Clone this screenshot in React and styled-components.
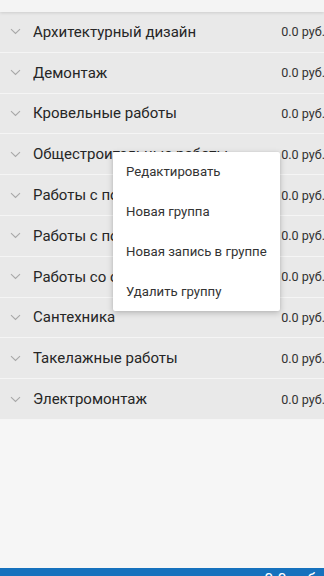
import React from "react";
import styled, { createGlobalStyle } from "styled-components";

const Global = createGlobalStyle`
  html, body { margin: 0; padding: 0; }
  body { font-family: Roboto, "Noto Sans", sans-serif; background: #f6f6f6; }
  * { box-sizing: border-box; }
`;

const Screen = styled.div`
  position: relative;
  width: 324px;
  height: 576px;
  overflow: hidden;
  display: flex;
  flex-direction: column;
  background: #f6f6f6;
`;

const TopStrip = styled.div`
  height: 12px;
  flex: none;
  background: #f4f4f4;
  box-shadow: 0 1px 3px rgba(0, 0, 0, 0.12);
  position: relative;
  z-index: 1;
`;

const List = styled.div`
  display: flex;
  flex-direction: column;
`;

const Row = styled.div`
  height: 40.8px;
  display: flex;
  align-items: center;
  background: #e9e9e9;
  border-bottom: 1px solid #f5f5f5;
  padding-left: 10px;
`;

const Chevron = styled.svg`
  width: 11px;
  height: 7px;
  flex: none;
  margin-right: 12px;
`;

const Name = styled.div`
  flex: 1;
  font-size: 15px;
  color: #262626;
  white-space: nowrap;
  overflow: hidden;
`;

const Amount = styled.div`
  font-size: 12.6px;
  color: #333;
  white-space: nowrap;
  margin-right: -1px;
`;

const Spacer = styled.div`
  flex: 1;
`;

const BottomBar = styled.div`
  height: 8px;
  flex: none;
  background: #1671bd;
  overflow: hidden;
  display: flex;
  justify-content: flex-end;
  padding-top: 4px;
  padding-right: 4px;
  color: #fff;
  font-size: 16px;
  line-height: 1;
`;

const Menu = styled.div`
  position: absolute;
  left: 113px;
  top: 152px;
  width: 167px;
  background: #fff;
  border-radius: 2px;
  box-shadow: 0 2px 6px rgba(0, 0, 0, 0.22), 0 0 2px rgba(0, 0, 0, 0.08);
  display: flex;
  flex-direction: column;
  z-index: 5;
`;

const MenuItem = styled.div`
  height: 39.8px;
  display: flex;
  align-items: center;
  padding-left: 13px;
  font-size: 13.2px;
  color: #333;
  white-space: nowrap;
`;

const items = [
  "Архитектурный дизайн",
  "Демонтаж",
  "Кровельные работы",
  "Общестроительные работы",
  "Работы с полами",
  "Работы с потолками",
  "Работы со стенами",
  "Сантехника",
  "Такелажные работы",
  "Электромонтаж",
];

const menu = ["Редактировать", "Новая группа", "Новая запись в группе", "Удалить группу"];

export default function App() {
  return (
    <>
      <Global />
      <Screen>
        <TopStrip />
        <List>
          {items.map((t) => (
            <Row key={t}>
              <Chevron viewBox="0 0 11 7">
                <path d="M1 1.2 L5.5 5.5 L10 1.2" fill="none" stroke="#a8a8a8" strokeWidth="1.1" />
              </Chevron>
              <Name>{t}</Name>
              <Amount>0.0 руб.</Amount>
            </Row>
          ))}
        </List>
        <Spacer />
        <BottomBar>0.0 руб.</BottomBar>
        <Menu>
          {menu.map((m) => (
            <MenuItem key={m}>{m}</MenuItem>
          ))}
        </Menu>
      </Screen>
    </>
  );
}
